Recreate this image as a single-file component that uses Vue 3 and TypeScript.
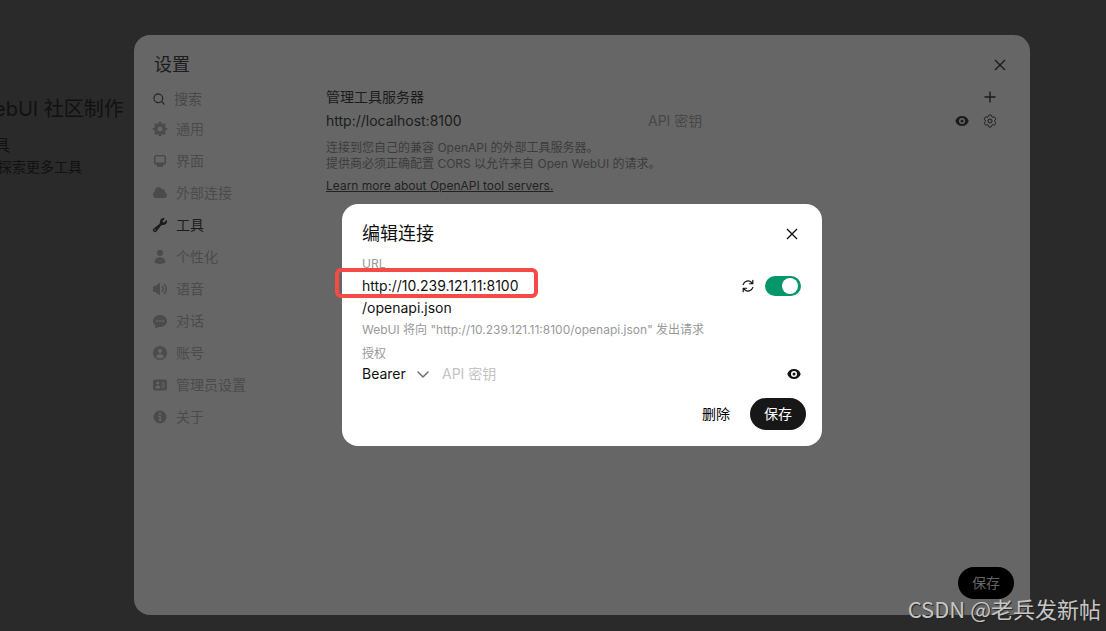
<script setup lang="ts">
import { ref } from 'vue'

interface Tab {
  id: string
  label: string
  box: string
  path: string
}

const tabs: Tab[] = [
  {
    id: 'general',
    label: '通用',
    box: '0 0 20 20',
    path: 'M8.34 1.804A1 1 0 0 1 9.32 1h1.36a1 1 0 0 1 .98.804l.295 1.473c.497.144.971.342 1.416.587l1.25-.834a1 1 0 0 1 1.262.125l.962.962a1 1 0 0 1 .125 1.262l-.834 1.25c.245.445.443.919.587 1.416l1.473.294a1 1 0 0 1 .804.98v1.361a1 1 0 0 1-.804.98l-1.473.295a6.95 6.95 0 0 1-.587 1.416l.834 1.25a1 1 0 0 1-.125 1.262l-.962.962a1 1 0 0 1-1.262.125l-1.25-.834a6.953 6.953 0 0 1-1.416.587l-.294 1.473a1 1 0 0 1-.98.804H9.32a1 1 0 0 1-.98-.804l-.295-1.473a6.957 6.957 0 0 1-1.416-.587l-1.25.834a1 1 0 0 1-1.262-.125l-.962-.962a1 1 0 0 1-.125-1.262l.834-1.25a6.957 6.957 0 0 1-.587-1.416l-1.473-.294A1 1 0 0 1 1 10.68V9.32a1 1 0 0 1 .804-.98l1.473-.295c.144-.497.342-.971.587-1.416l-.834-1.25a1 1 0 0 1 .125-1.262l.962-.962A1 1 0 0 1 5.38 3.03l1.25.834a6.957 6.957 0 0 1 1.416-.587l.294-1.473ZM13 10a3 3 0 1 1-6 0 3 3 0 0 1 6 0Z',
  },
  {
    id: 'interface',
    label: '界面',
    box: '0 0 16 16',
    path: 'M2 4.25A2.25 2.25 0 0 1 4.25 2h7.5A2.25 2.25 0 0 1 14 4.25v5.5A2.25 2.25 0 0 1 11.75 12h-1.312c.1.128.21.248.328.36a.75.75 0 0 1 .234.545v.345a.75.75 0 0 1-.75.75h-4.5a.75.75 0 0 1-.75-.75v-.345a.75.75 0 0 1 .234-.545c.118-.111.228-.232.328-.36H4.25A2.25 2.25 0 0 1 2 9.75v-5.5Zm2.25-.75a.75.75 0 0 0-.75.75v4.5c0 .414.336.75.75.75h7.5a.75.75 0 0 0 .75-.75v-4.5a.75.75 0 0 0-.75-.75h-7.5Z',
  },
  {
    id: 'connections',
    label: '外部连接',
    box: '0 0 16 16',
    path: 'M1 9.5A3.5 3.5 0 0 0 4.5 13H12a3 3 0 0 0 .917-5.857 2.503 2.503 0 0 0-3.198-3.019 3.5 3.5 0 0 0-6.628 2.171A3.5 3.5 0 0 0 1 9.5Z',
  },
  {
    id: 'tools',
    label: '工具',
    box: '0 0 16 16',
    path: 'M11.5 8a3.5 3.5 0 0 0 3.362-4.476c-.094-.325-.497-.39-.736-.15L12.099 5.4a.48.48 0 0 1-.653.033 8.554 8.554 0 0 1-.879-.879.48.48 0 0 1 .033-.653l2.027-2.028c.24-.239.175-.642-.15-.736a3.502 3.502 0 0 0-4.476 3.427c.018.99-.133 2.093-.914 2.7l-5.31 4.13a2.015 2.015 0 1 0 2.828 2.827l4.13-5.309c.607-.78 1.71-.932 2.7-.914L11.5 8ZM3 13.75a.75.75 0 1 0 0-1.5.75.75 0 0 0 0 1.5Z',
  },
  {
    id: 'personalization',
    label: '个性化',
    box: '0 0 24 24',
    path: 'M7.5 6a4.5 4.5 0 1 1 9 0 4.5 4.5 0 0 1-9 0ZM3.751 20.105a8.25 8.25 0 0 1 16.498 0 .75.75 0 0 1-.437.695A18.683 18.683 0 0 1 12 22.5c-2.786 0-5.433-.608-7.812-1.7a.75.75 0 0 1-.437-.695Z',
  },
  {
    id: 'audio',
    label: '语音',
    box: '0 0 16 16',
    path: 'M7.557 2.066A.75.75 0 0 1 8 2.75v10.5a.75.75 0 0 1-1.248.56L3.59 11H2a1 1 0 0 1-1-1V6a1 1 0 0 1 1-1h1.59l3.162-2.81a.75.75 0 0 1 .805-.124ZM12.95 3.05a.75.75 0 1 0-1.06 1.06 5.5 5.5 0 0 1 0 7.78.75.75 0 1 0 1.06 1.06 7 7 0 0 0 0-9.9ZM10.828 5.172a.75.75 0 1 0-1.06 1.06 2.5 2.5 0 0 1 0 3.536.75.75 0 1 0 1.06 1.06 4 4 0 0 0 0-5.656Z',
  },
  {
    id: 'chats',
    label: '对话',
    box: '0 0 16 16',
    path: 'M8 2C4.262 2 1 4.57 1 8c0 1.86.98 3.486 2.455 4.566a3.472 3.472 0 0 1-.469 1.26.75.75 0 0 0 .713 1.14 6.961 6.961 0 0 0 3.06-1.06c.403.062.818.094 1.241.094 3.738 0 7-2.57 7-6s-3.262-6-7-6ZM5 9a1 1 0 1 0 0-2 1 1 0 0 0 0 2Zm7-1a1 1 0 1 1-2 0 1 1 0 0 1 2 0ZM8 9a1 1 0 1 0 0-2 1 1 0 0 0 0 2Z',
  },
  {
    id: 'account',
    label: '账号',
    box: '0 0 16 16',
    path: 'M15 8A7 7 0 1 1 1 8a7 7 0 0 1 14 0Zm-5-2a2 2 0 1 1-4 0 2 2 0 0 1 4 0ZM8 9c-1.825 0-3.422.977-4.295 2.437A5.49 5.49 0 0 0 8 13.5a5.49 5.49 0 0 0 4.294-2.063A4.997 4.997 0 0 0 8 9Z',
  },
  {
    id: 'admin',
    label: '管理员设置',
    box: '0 0 24 24',
    path: 'M4.5 3.75a3 3 0 0 0-3 3v10.5a3 3 0 0 0 3 3h15a3 3 0 0 0 3-3V6.75a3 3 0 0 0-3-3h-15Zm4.125 3a2.25 2.25 0 1 0 0 4.5 2.25 2.25 0 0 0 0-4.5Zm-3.873 8.703a4.126 4.126 0 0 1 7.746 0 .75.75 0 0 1-.351.92 7.47 7.47 0 0 1-3.522.877 7.47 7.47 0 0 1-3.522-.877.75.75 0 0 1-.351-.92ZM15 8.25a.75.75 0 0 0 0 1.5h3.75a.75.75 0 0 0 0-1.5H15ZM14.25 12a.75.75 0 0 1 .75-.75h3.75a.75.75 0 0 1 0 1.5H15a.75.75 0 0 1-.75-.75Zm.75 2.25a.75.75 0 0 0 0 1.5h3.75a.75.75 0 0 0 0-1.5H15Z',
  },
  {
    id: 'about',
    label: '关于',
    box: '0 0 24 24',
    path: 'M2.25 12a9.75 9.75 0 1 1 19.5 0 9.75 9.75 0 0 1-19.5 0ZM12 5.6a1.7 1.7 0 1 0 0 3.4A1.7 1.7 0 0 0 12 5.6ZM9.8 10.3v1.8H11V16H9.8v1.8h4.7V16h-1.2v-5.7H9.8Z',
  },
]

const eyePath =
  'M8 9.5a1.5 1.5 0 1 0 0-3 1.5 1.5 0 0 0 0 3ZM1.38 8.28a.87.87 0 0 1 0-.566 7.003 7.003 0 0 1 13.238.006.87.87 0 0 1 0 .566A7.003 7.003 0 0 1 1.379 8.28ZM11 8a3 3 0 1 1-6 0 3 3 0 0 1 6 0Z'

const activeTab = ref('tools')
const search = ref('')
const serverUrl = ref('http://localhost:8100')
const serverKey = ref('')
const url = ref('http://10.239.121.11:8100')
const path = ref('/openapi.json')
const auth = ref('Bearer')
const apiKey = ref('')
const enabled = ref(true)
</script>

<template>
  <div class="app">
    <div class="backpage" aria-hidden="true">
      <p class="community">ebUI 社区制作</p>
      <p class="item-title">具</p>
      <p class="item-sub">探索更多工具</p>
    </div>

    <div class="overlay">
      <section class="settings" aria-label="设置">
        <header class="head">
          <h1>设置</h1>
          <button class="icon-btn" type="button" aria-label="关闭设置">
            <svg class="i16" viewBox="0 0 16 16"><path class="line" d="M3 3l10 10M13 3L3 13" /></svg>
          </button>
        </header>

        <div class="body">
          <nav class="side">
            <label class="search">
              <svg class="i14" viewBox="0 0 20 20">
                <path fill-rule="evenodd" d="M9 3.5a5.5 5.5 0 1 0 0 11 5.5 5.5 0 0 0 0-11ZM2 9a7 7 0 1 1 12.452 4.391l3.328 3.329a.75.75 0 1 1-1.06 1.06l-3.329-3.328A7 7 0 0 1 2 9Z" />
              </svg>
              <input v-model="search" type="text" placeholder="搜索" aria-label="搜索" />
            </label>
            <button
              v-for="tab in tabs"
              :key="tab.id"
              type="button"
              class="tab"
              :class="{ active: tab.id === activeTab }"
              @click="activeTab = tab.id"
            >
              <svg class="i16" :viewBox="tab.box"><path fill-rule="evenodd" :d="tab.path" /></svg>
              <span>{{ tab.label }}</span>
            </button>
          </nav>

          <div class="content">
            <div class="row">
              <h2>管理工具服务器</h2>
              <button class="icon-btn" type="button" aria-label="添加">
                <svg class="i16" viewBox="0 0 16 16"><path class="line" d="M8 2.5v11M2.5 8h11" /></svg>
              </button>
            </div>
            <div class="row server">
              <input v-model="serverUrl" class="grow server-url" type="text" aria-label="服务器 URL" />
              <input v-model="serverKey" class="grow" type="text" placeholder="API 密钥" aria-label="服务器 API 密钥" />
              <button class="icon-btn" type="button" aria-label="显示密钥">
                <svg class="i16" viewBox="0 0 16 16"><path fill-rule="evenodd" :d="eyePath" /></svg>
              </button>
              <button class="icon-btn gear" type="button" aria-label="配置">
                <svg class="i16" viewBox="0 0 24 24">
                  <path class="outline" d="M9.594 3.94c.09-.542.56-.94 1.11-.94h2.593c.55 0 1.02.398 1.11.94l.213 1.281c.063.374.313.686.645.87.074.04.147.083.22.127.325.196.72.257 1.075.124l1.217-.456a1.125 1.125 0 0 1 1.37.49l1.296 2.247a1.125 1.125 0 0 1-.26 1.431l-1.003.827c-.293.241-.438.613-.43.992a7.723 7.723 0 0 1 0 .255c-.008.378.137.75.43.991l1.004.827c.424.35.534.955.26 1.43l-1.298 2.247a1.125 1.125 0 0 1-1.369.491l-1.217-.456c-.355-.133-.75-.072-1.076.124a6.47 6.47 0 0 1-.22.128c-.331.183-.581.495-.644.869l-.213 1.281c-.09.543-.56.94-1.11.94h-2.594c-.55 0-1.019-.398-1.11-.94l-.213-1.281c-.062-.374-.312-.686-.644-.87a6.52 6.52 0 0 1-.22-.127c-.325-.196-.72-.257-1.076-.124l-1.217.456a1.125 1.125 0 0 1-1.369-.49l-1.297-2.247a1.125 1.125 0 0 1 .26-1.431l1.004-.827c.292-.24.437-.613.43-.991a6.932 6.932 0 0 1 0-.255c.007-.38-.138-.751-.43-.992l-1.004-.827a1.125 1.125 0 0 1-.26-1.43l1.297-2.247a1.125 1.125 0 0 1 1.37-.491l1.216.456c.356.133.751.072 1.076-.124.072-.044.146-.086.22-.128.332-.183.582-.495.644-.869l.214-1.28ZM15 12a3 3 0 1 1-6 0 3 3 0 0 1 6 0Z" />
                </svg>
              </button>
            </div>
            <p class="hint">连接到您自己的兼容 OpenAPI 的外部工具服务器。<br />提供商必须正确配置 CORS 以允许来自 Open WebUI 的请求。</p>
            <a class="more" href="#tool-servers">Learn more about OpenAPI tool servers.</a>
          </div>
        </div>

        <footer class="foot">
          <button class="pill dim" type="button">保存</button>
        </footer>
      </section>
    </div>

    <div class="overlay">
      <form class="dialog" aria-label="编辑连接" @submit.prevent>
        <header class="dialog-head">
          <h2>编辑连接</h2>
          <button class="icon-btn" type="button" aria-label="关闭">
            <svg class="i16" viewBox="0 0 16 16"><path class="line" d="M3 3l10 10M13 3L3 13" /></svg>
          </button>
        </header>

        <div class="url-field">
          <label class="caption" for="conn-url">URL</label>
          <div class="url-row">
            <input id="conn-url" v-model="url" class="grow" type="text" />
            <button class="icon-btn" type="button" aria-label="验证连接">
              <svg class="i16" viewBox="0 0 20 20">
                <path d="M15.312 11.424a5.5 5.5 0 0 1-9.201 2.466l-.312-.311h2.433a.75.75 0 0 0 0-1.5H3.989a.75.75 0 0 0-.75.75v4.242a.75.75 0 0 0 1.5 0v-2.43l.31.31a7 7 0 0 0 11.712-3.138.75.75 0 0 0-1.449-.39Zm1.23-3.723a.75.75 0 0 0 .219-.53V2.929a.75.75 0 0 0-1.5 0V5.36l-.31-.31A7 7 0 0 0 3.239 8.188a.75.75 0 1 0 1.448.389A5.5 5.5 0 0 1 13.89 6.11l.311.31h-2.432a.75.75 0 0 0 0 1.5h4.243a.75.75 0 0 0 .53-.219Z" />
              </svg>
            </button>
            <input v-model="enabled" class="switch" type="checkbox" role="switch" aria-label="启用" />
          </div>
          <span class="mark" aria-hidden="true"></span>
        </div>
        <input v-model="path" class="path" type="text" aria-label="路径" />
        <p class="note">WebUI 将向 "{{ url }}{{ path }}" 发出请求</p>

        <label class="caption auth-label" for="conn-auth">授权</label>
        <div class="auth-row">
          <span class="select-wrap">
            <select id="conn-auth" v-model="auth">
              <option>Bearer</option>
              <option>Session</option>
            </select>
            <svg class="chevron" viewBox="0 0 20 20"><path d="M5 8l5 5 5-5" /></svg>
          </span>
          <input v-model="apiKey" class="grow" type="text" placeholder="API 密钥" aria-label="API 密钥" />
          <button class="icon-btn" type="button" aria-label="显示 API 密钥">
            <svg class="i16" viewBox="0 0 16 16"><path fill-rule="evenodd" :d="eyePath" /></svg>
          </button>
        </div>

        <footer class="actions">
          <button class="pill plain" type="button">删除</button>
          <button class="pill" type="submit">保存</button>
        </footer>
      </form>
    </div>

    <p class="watermark">CSDN @老兵发新帖</p>
  </div>
</template>

<style>
body {
  margin: 0;
  background: #2a2a2a;
}
</style>

<style scoped>
.app {
  position: relative;
  box-sizing: border-box;
  min-height: 100vh;
  overflow: hidden;
  background: #2a2a2a;
  font-family: Inter, 'Noto Sans CJK SC', sans-serif;
  font-size: 14px;
  line-height: 20px;
}

h1,
h2,
p {
  margin: 0;
  font-weight: 400;
}

button,
input,
select {
  margin: 0;
  padding: 0;
  border: 0;
  outline: 0;
  background: none;
  color: inherit;
  font: inherit;
  min-width: 0;
}

button {
  cursor: pointer;
}

svg {
  display: block;
  flex: none;
  fill: currentColor;
}

.i16 {
  width: 16px;
  height: 16px;
}

.i14 {
  width: 14px;
  height: 14px;
}

.line {
  fill: none;
  stroke: currentColor;
  stroke-width: 1.4;
}

.outline {
  fill: none;
  stroke: currentColor;
  stroke-width: 1.5;
}

.icon-btn {
  flex: none;
}

.grow {
  flex: 1;
}

.backpage {
  padding-top: 95px;
  color: #111;
  white-space: nowrap;
}

.community {
  margin-left: -6px;
  font-size: 20px;
  line-height: 28px;
}

.item-title {
  margin: 10px 0 0 -6px;
  font-size: 16px;
  line-height: 24px;
}

.item-sub {
  margin-left: -2px;
}

.overlay {
  position: absolute;
  inset: 0;
  display: flex;
  align-items: center;
  justify-content: center;
  padding: 19px 0 0 58px;
}

.settings {
  box-sizing: border-box;
  display: flex;
  flex-direction: column;
  width: 100%;
  max-width: 896px;
  min-height: 580px;
  padding: 16px;
  border-radius: 16px;
  background: #666;
  color: #1c1c1c;
}

.head {
  display: flex;
  align-items: center;
  justify-content: space-between;
  padding: 0 6px 0 4px;
}

h1 {
  font-size: 18px;
  line-height: 28px;
}

.body {
  display: flex;
  flex: 1;
  gap: 16px;
}

.side {
  flex: none;
  width: 160px;
}

.search {
  display: flex;
  align-items: center;
  gap: 8px;
  height: 24px;
  margin: 8px 0 2px;
  padding-left: 2px;
}

.search input {
  width: 120px;
}

input::placeholder {
  color: #484848;
  opacity: 1;
}

.tab {
  display: flex;
  align-items: center;
  gap: 8px;
  width: 100%;
  height: 32px;
  padding-left: 2px;
  color: #4b4b4b;
  text-align: left;
}

.tab.active {
  color: #1c1c1c;
}

.content {
  flex: 1;
  padding-top: 8px;
}

.row {
  display: flex;
  align-items: center;
  height: 20px;
  padding-right: 16px;
}

h2 {
  flex: 1;
  font-size: 14px;
}

.server {
  height: 28px;
}

.server-url {
  margin-right: 16px;
}

.gear {
  margin-left: 12px;
}

.hint {
  margin-top: 5px;
  color: #3c3c3c;
  font-size: 12px;
  line-height: 16px;
}

.more {
  display: inline-block;
  margin-top: 6px;
  color: #222;
  font-size: 12px;
  line-height: 16px;
}

.foot {
  display: flex;
  justify-content: flex-end;
}

.pill {
  height: 32px;
  padding: 0 14px;
  border-radius: 16px;
  background: #171717;
  color: #fff;
}

.pill.dim {
  background: #000;
  color: #666;
}

.pill.plain {
  background: none;
  color: #000;
}

.dialog {
  box-sizing: border-box;
  width: 480px;
  padding: 16px 16px 16px 20px;
  border-radius: 16px;
  background: #fff;
  color: #111;
}

.dialog-head {
  display: flex;
  align-items: center;
  padding-right: 6px;
}

.dialog-head h2 {
  font-size: 18px;
  line-height: 28px;
}

.url-field {
  position: relative;
  padding-top: 8px;
}

.caption {
  display: block;
  color: #999;
  font-size: 12px;
  line-height: 16px;
}

.url-row {
  display: flex;
  align-items: center;
  height: 28px;
  padding-right: 5px;
}

.url-row .icon-btn {
  margin-right: 9px;
}

.mark {
  position: absolute;
  top: 20px;
  left: -27px;
  box-sizing: border-box;
  width: 203px;
  height: 30px;
  border: 4px solid #f54a45;
  border-radius: 6px;
  pointer-events: none;
}

.switch {
  appearance: none;
  box-sizing: border-box;
  width: 36px;
  height: 20px;
  padding: 2px 3px;
  border-radius: 10px;
  background: #d4d4d4;
}

.switch::before {
  content: '';
  display: block;
  width: 16px;
  height: 16px;
  border-radius: 50%;
  background: #fff;
}

.switch:checked {
  background: #059669;
}

.switch:checked::before {
  margin-left: auto;
}

.path {
  display: block;
  width: 100%;
  height: 16px;
}

.note {
  margin-top: 6px;
  color: #999;
  font-size: 12px;
  line-height: 16px;
}

.auth-label {
  margin-top: 8px;
}

.auth-row {
  display: flex;
  align-items: center;
  height: 24px;
  padding-right: 4px;
}

.auth-row input::placeholder {
  color: #c4c4c4;
}

.select-wrap {
  position: relative;
  flex: none;
  width: 80px;
}

.select-wrap select {
  display: block;
  appearance: none;
  width: 72px;
  height: 20px;
}

.chevron {
  position: absolute;
  top: 0;
  right: 9px;
  width: 20px;
  height: 20px;
  fill: none;
  stroke: #6b7280;
  stroke-width: 1.5;
  stroke-linecap: round;
  stroke-linejoin: round;
  pointer-events: none;
}

.actions {
  display: flex;
  justify-content: flex-end;
  gap: 6px;
  margin-top: 12px;
}

.watermark {
  position: absolute;
  right: 5px;
  bottom: 9px;
  color: #c6c6c6;
  font-family: 'Noto Sans CJK SC', sans-serif;
  font-size: 22px;
  line-height: 28px;
  text-shadow: 1px 1px 1px #222;
}
</style>
